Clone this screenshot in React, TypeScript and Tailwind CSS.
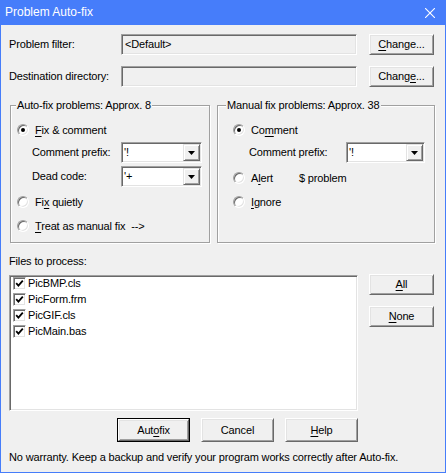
import React from "react";

// accelerator letter
function U({ children }: { children: React.ReactNode }) {
  return <span className="underline underline-offset-[2px]">{children}</span>;
}

function Button({
  children,
  className = "",
  isDefault = false,
}: {
  children: React.ReactNode;
  className?: string;
  isDefault?: boolean;
}) {
  const face = (
    <div className="h-full w-full flex items-center justify-center bg-[#f0f0f0] border border-t-white border-l-white border-r-[#696969] border-b-[#696969] shadow-[inset_1px_1px_0_#e3e3e3,inset_-1px_-1px_0_#a0a0a0]">
      {children}
    </div>
  );
  if (isDefault) {
    return <div className={`border border-black ${className}`}>{face}</div>;
  }
  return <div className={className}>{face}</div>;
}

function Field({ children, className = "" }: { children?: React.ReactNode; className?: string }) {
  return (
    <div
      className={`h-[21px] bg-[#f0f0f0] border border-t-[#a0a0a0] border-l-[#a0a0a0] border-r-white border-b-white shadow-[inset_1px_1px_0_#696969,inset_-1px_-1px_0_#e3e3e3] pl-[3px] flex items-center ${className}`}
    >
      {children}
    </div>
  );
}

function Combo({ value, className = "" }: { value: string; className?: string }) {
  return (
    <div
      className={`h-[21px] bg-white border border-t-[#a0a0a0] border-l-[#a0a0a0] border-r-white border-b-white shadow-[inset_1px_1px_0_#696969,inset_-1px_-1px_0_#e3e3e3] p-[1px] flex ${className}`}
    >
      <span className="flex-1 pl-[1px] leading-[17px]">{value}</span>
      <span className="w-[17px] h-[17px] flex items-center justify-center bg-[#f0f0f0] border border-t-[#e3e3e3] border-l-[#e3e3e3] border-r-[#696969] border-b-[#696969] shadow-[inset_1px_1px_0_#fff,inset_-1px_-1px_0_#a0a0a0]">
        <svg width="7" height="4" viewBox="0 0 7 4">
          <path d="M0 0H7L3.5 4Z" fill="#000" />
        </svg>
      </span>
    </div>
  );
}

function Radio({ checked = false }: { checked?: boolean }) {
  return (
    <span className="w-[12px] h-[12px] shrink-0 rounded-full bg-white border border-t-[#a0a0a0] border-l-[#a0a0a0] border-r-white border-b-white shadow-[inset_1px_1px_0_#696969,inset_-1px_-1px_0_#e3e3e3] flex items-center justify-center">
      {checked && <span className="w-[4px] h-[4px] rounded-full bg-black" />}
    </span>
  );
}

function Check() {
  return (
    <span className="w-[13px] h-[13px] shrink-0 bg-white border border-t-[#a0a0a0] border-l-[#a0a0a0] border-r-white border-b-white shadow-[inset_1px_1px_0_#696969,inset_-1px_-1px_0_#e3e3e3] flex items-center justify-center">
      <svg width="9" height="9" viewBox="0 0 9 9">
        <path d="M1.2 4.2L3.4 6.6L7.8 1.6" fill="none" stroke="#000" strokeWidth="1.8" />
      </svg>
    </span>
  );
}

function Group({
  title,
  titleClass,
  className = "",
  children,
}: {
  title: string;
  titleClass: string;
  className?: string;
  children: React.ReactNode;
}) {
  return (
    <div
      className={`relative h-[138px] border border-[#a0a0a0] shadow-[inset_1px_1px_0_#fff,1px_1px_0_#fff] pt-[16px] ${className}`}
    >
      <span className={`absolute top-[-8px] px-[1px] leading-[14px] bg-[#f0f0f0] ${titleClass}`}>{title}</span>
      {children}
    </div>
  );
}

const files = ["PicBMP.cls", "PicForm.frm", "PicGIF.cls", "PicMain.bas"];

export default function App() {
  return (
    <div className="w-[446px] h-[473px] bg-[#467dfa] flex flex-col font-['Liberation_Sans',Arial,sans-serif] text-[11px] leading-[13px] text-black tracking-[-0.15px]">
      {/* Title bar */}
      <div className="h-[25px] shrink-0 flex items-center justify-between pl-[5px] pr-[11px] text-white text-[12px] tracking-normal">
        <span>Problem Auto-fix</span>
        <svg width="10" height="10" viewBox="0 0 10 10">
          <path d="M0 0L10 10M10 0L0 10" stroke="#fff" strokeWidth="1.1" />
        </svg>
      </div>

      <div className="flex-1 mx-[1px] mb-[1px] bg-[#f0f0f0] pl-[8px] pt-[9px] flex flex-col">
        {/* Filter */}
        <div className="flex items-center h-[21px]">
          <span className="w-[112px]">Problem filter:</span>
          <Field className="w-[236px]">&lt;Default&gt;</Field>
          <Button className="ml-[12px] w-[65px] h-[21px]">
            <span>
              <U>C</U>hange...
            </span>
          </Button>
        </div>
        <div className="flex items-center h-[21px] mt-[11px]">
          <span className="w-[112px]">Destination directory:</span>
          <Field className="w-[236px]" />
          <Button className="ml-[12px] w-[65px] h-[21px]">
            <span>
              Chang<U>e</U>...
            </span>
          </Button>
        </div>

        {/* Groups */}
        <div className="flex mt-[18px]">
          <Group title="Auto-fix problems: Approx. 8" titleClass="left-[5px]" className="ml-[1px] w-[200px] pl-[6px]">
            <div className="h-[16px] flex items-center gap-[6px]">
              <Radio checked />
              <span>
                <U>F</U>ix &amp; comment
              </span>
            </div>
            <div className="h-[21px] mt-[4px] flex items-center">
              <span className="ml-[15px] w-[89px]">Comment prefix:</span>
              <Combo value="'!" className="w-[81px]" />
            </div>
            <div className="h-[21px] mt-[3px] flex items-center">
              <span className="ml-[15px] w-[89px]">Dead code:</span>
              <Combo value="'+" className="w-[81px]" />
            </div>
            <div className="h-[16px] mt-[7px] flex items-center gap-[6px]">
              <Radio />
              <span>
                Fi<U>x</U> quietly
              </span>
            </div>
            <div className="h-[16px] mt-[8px] flex items-center gap-[6px]">
              <Radio />
              <span>
                <U>T</U>reat as manual fix
              </span>
              <span>--&gt;</span>
            </div>
          </Group>

          <Group title="Manual fix problems: Approx. 38" titleClass="left-[8px]" className="ml-[7px] w-[218px] pl-[15px]">
            <div className="h-[16px] flex items-center gap-[6px]">
              <Radio checked />
              <span>
                Co<U>m</U>ment
              </span>
            </div>
            <div className="h-[21px] mt-[4px] flex items-center">
              <span className="ml-[16px] w-[97px]">Comment prefix:</span>
              <Combo value="'!" className="w-[79px]" />
            </div>
            <div className="h-[16px] mt-[7px] flex items-center gap-[6px]">
              <Radio />
              <span className="w-[42px]">
                A<U>l</U>ert
              </span>
              <span>$ problem</span>
            </div>
            <div className="h-[16px] mt-[8px] flex items-center gap-[6px]">
              <Radio />
              <span>
                <U>I</U>gnore
              </span>
            </div>
          </Group>
        </div>

        {/* Files */}
        <div className="mt-[11px] leading-[14px]">Files to process:</div>
        <div className="flex items-start mt-[6px]">
          <div className="mt-[1px] w-[349px] h-[136px] bg-white border border-t-[#a0a0a0] border-l-[#a0a0a0] border-r-white border-b-white shadow-[inset_1px_1px_0_#696969,inset_-1px_-1px_0_#e3e3e3] pt-[1px] pl-[3px] flex flex-col gap-[3px]">
            {files.map((f) => (
              <div key={f} className="h-[13px] flex items-center gap-[1px]">
                <Check />
                <span className="ml-[1px]">{f}</span>
              </div>
            ))}
          </div>
          <div className="ml-[11px] flex flex-col">
            <Button className="w-[65px] h-[21px]">
              <span>
                <U>A</U>ll
              </span>
            </Button>
            <Button className="w-[65px] h-[21px] mt-[11px]">
              <span>
                <U>N</U>one
              </span>
            </Button>
          </div>
        </div>

        {/* Dialog buttons */}
        <div className="flex mt-[7px] pl-[108px] gap-[11px]">
          <Button isDefault className="w-[73px] h-[24px]">
            <span>
              Aut<U>o</U>fix
            </span>
          </Button>
          <Button className="w-[73px] h-[24px]">Cancel</Button>
          <Button className="w-[73px] h-[24px]">
            <span>
              <U>H</U>elp
            </span>
          </Button>
        </div>

        <div className="mt-[9px]">No warranty. Keep a backup and verify your program works correctly after Auto-fix.</div>
      </div>
    </div>
  );
}
